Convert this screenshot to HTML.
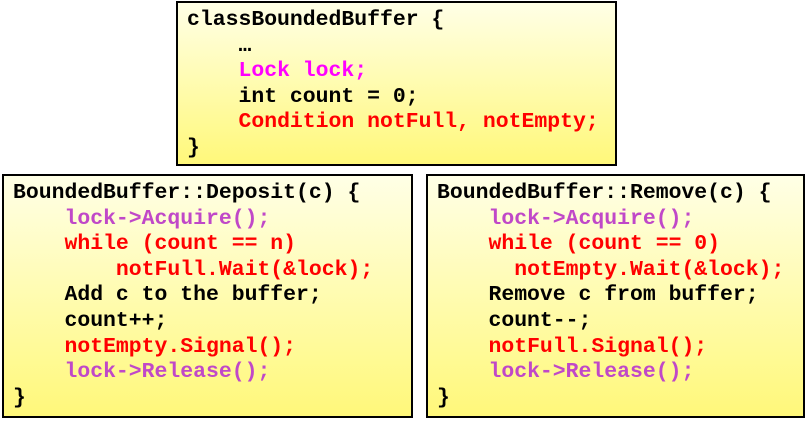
<!DOCTYPE html>
<html><head><style>
body{margin:0;width:806px;height:423px;background:#fff;position:relative;overflow:hidden}
.b{position:absolute;box-sizing:border-box;border:2px solid #000;background:linear-gradient(#ffffe6,#fff87a);}
pre{margin:0;font-family:"Liberation Mono",monospace;font-weight:bold;font-size:21.45px;line-height:25.6px;color:#000;position:absolute;left:9px;top:5px}
.p{color:#c048c8}.m{color:#ff00ff}.r{color:#ff0000}
</style></head><body>
<div class="b" style="left:176px;top:1px;width:441px;height:165px"><pre>classBoundedBuffer {
    …
    <span class="m">Lock lock;</span>
    int count = 0;
    <span class="r">Condition notFull, notEmpty;</span>
}</pre></div>
<div class="b" style="left:2px;top:174px;width:411px;height:244px"><pre>BoundedBuffer::Deposit(c) {
    <span class="p">lock-&gt;Acquire();</span>
    <span class="r">while (count == n)</span>
        <span class="r">notFull.Wait(&amp;lock);</span>
    Add c to the buffer;
    count++;
    <span class="r">notEmpty.Signal();</span>
    <span class="p">lock-&gt;Release();</span>
}</pre></div>
<div class="b" style="left:426px;top:174px;width:379px;height:244px"><pre>BoundedBuffer::Remove(c) {
    <span class="p">lock-&gt;Acquire();</span>
    <span class="r">while (count == 0)</span>
      <span class="r">notEmpty.Wait(&amp;lock);</span>
    Remove c from buffer;
    count--;
    <span class="r">notFull.Signal();</span>
    <span class="p">lock-&gt;Release();</span>
}</pre></div>
</body></html>
